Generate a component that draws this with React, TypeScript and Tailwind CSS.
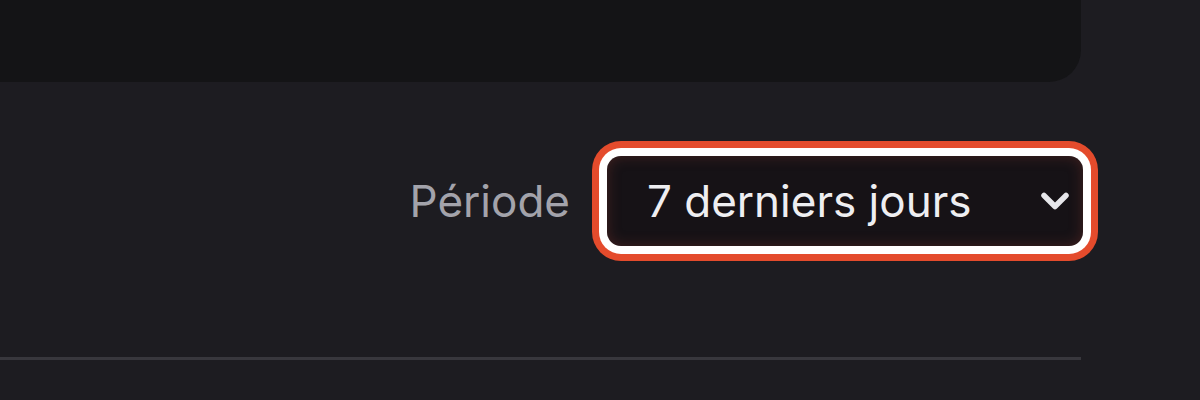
import { ChevronDown } from "lucide-react";

export default function App() {
  return (
    <div
      className="h-[400px] w-[1200px] overflow-hidden bg-[#1d1c21]"
      style={{ fontFamily: "Inter, 'Noto Sans', sans-serif" }}
    >
      {/* top card (cut off) */}
      <div className="h-[82px] w-[1081px] rounded-br-[32px] bg-[#141416]" />

      {/* period filter */}
      <div className="mt-[74px] flex w-[1083px] items-center justify-end gap-[37px]">
        <span className="text-[44px] leading-none text-[#a3a3ab]">Période</span>
        <div className="flex h-[90px] w-[476px] items-center justify-between rounded-[14px] bg-[#161216] pl-[40px] pr-[6px] shadow-[inset_0_0_14px_rgba(150,60,50,0.35),0_0_0_8px_#ffffff,0_0_0_15px_#e44b2c]">
          <span className="text-[44px] leading-none text-[#eeeef1]">7 derniers jours</span>
          <ChevronDown className="h-[44px] w-[44px] text-[#e6e6ea]" strokeWidth={3} />
        </div>
      </div>

      {/* divider */}
      <div className="mt-[111px] h-[3px] w-[1081px] bg-[#38373d]" />
    </div>
  );
}
